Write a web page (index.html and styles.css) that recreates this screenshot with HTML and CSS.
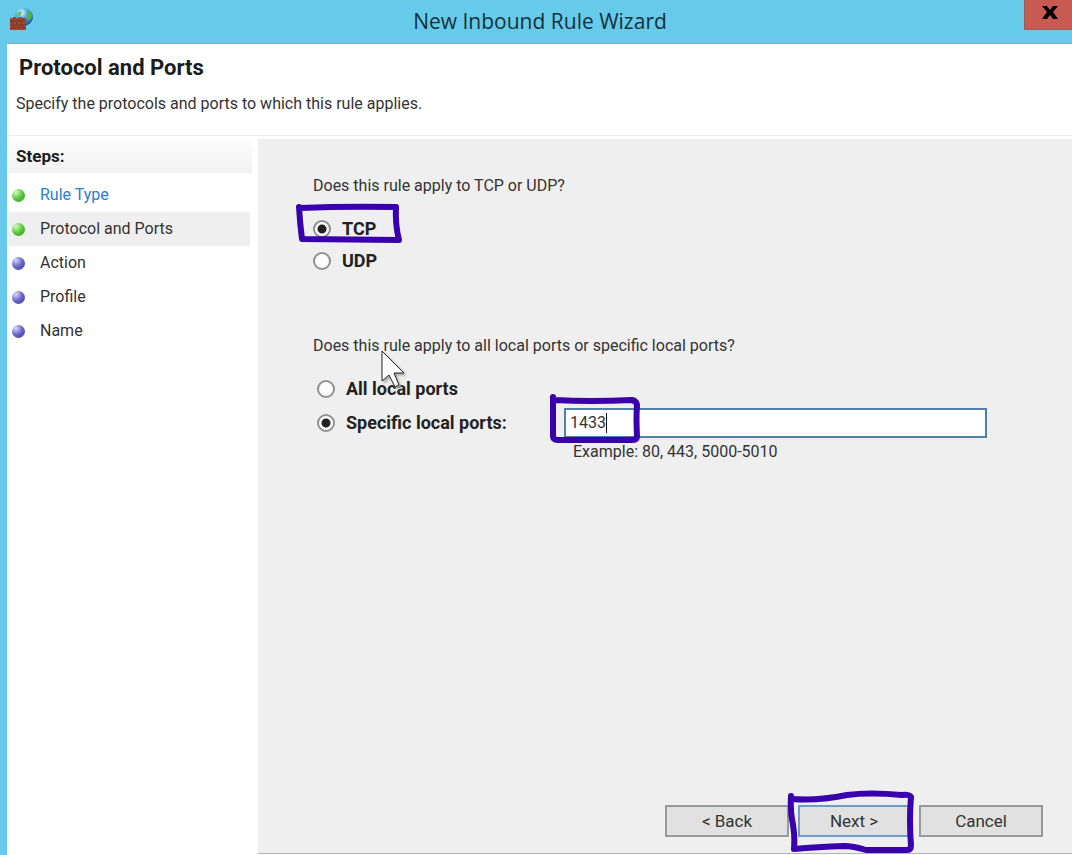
FILE: index.html
```html
<!DOCTYPE html>
<html lang="en">
<head>
  <meta charset="UTF-8" />
  <title>New Inbound Rule Wizard</title>
  <link rel="stylesheet" href="styles.css">
</head>
<body>
  <div class="titlebar">
    <svg class="app-icon" width="26" height="24" viewBox="0 0 26 24">
      <defs>
        <radialGradient id="globe" cx="35%" cy="25%" r="75%">
          <stop offset="0" stop-color="#e8f8ff" />
          <stop offset="0.4" stop-color="#5cb4dc" />
          <stop offset="1" stop-color="#1d5f9c" />
        </radialGradient>
      </defs>
      <circle cx="15" cy="9" r="9" fill="url(#globe)" />
      <path d="M18 3l3 1 2 3 -1 4 -2 1 -2 -4z" fill="#54b53c" />
      <path d="M8 6l3 -3 2 1 -2 4 -3 1z" fill="#72bd66" />
      <path d="M1 10h3v-1h3v1h3v-1h3v1h4v12H1z" fill="#a54832" />
      <path d="M1 13h16M1 17h16M1 20h16M5 10v3M10 10v3M14 10v3M3 13v4M8 13v4M12 13v4M5 17v3M10 17v3M14 17v3" stroke="#7c3424" fill="none" />
    </svg>
    <h1>New Inbound Rule Wizard</h1>
    <button class="close" aria-label="Close">
      <svg width="16" height="13" viewBox="0 0 16 13"><path d="M0 0h5l3 4 3-4h5l-5 6 5 7h-5l-3-4-3 4H0l5-7z" /></svg>
    </button>
  </div>

  <div class="window">
    <header>
      <h2>Protocol and Ports</h2>
      <p>Specify the protocols and ports to which this rule applies.</p>
    </header>

    <div class="main">
      <nav>
        <h3>Steps:</h3>
        <ul>
          <li class="done"><a href="#">Rule Type</a></li>
          <li class="done current">Protocol and Ports</li>
          <li>Action</li>
          <li>Profile</li>
          <li>Name</li>
        </ul>
      </nav>

      <form>
        <div class="question">
          <p>Does this rule apply to TCP or UDP?</p>
          <div class="option">
            <input type="radio" id="tcp" name="protocol" checked>
            <label for="tcp">TCP</label>
            <svg class="mark mark-tcp" width="108" height="42" viewBox="0 0 108 42">
              <path d="M4 5Q5 22 7 37L104 38Q100 22 101 5Q50 4 5 6" />
            </svg>
          </div>
          <div class="option">
            <input type="radio" id="udp" name="protocol">
            <label for="udp">UDP</label>
          </div>
        </div>

        <div class="question ports">
          <p>Does this rule apply to all local ports or specific local ports?
            <svg class="cursor" width="28" height="42" viewBox="0 0 28 42">
              <path d="M1 1V31L8 25L14 37L18 35L13 23H23Z" />
            </svg>
          </p>
          <div class="option">
            <input type="radio" id="all" name="ports">
            <label for="all">All local ports</label>
          </div>
          <div class="option specific">
            <input type="radio" id="specific" name="ports" checked>
            <label for="specific">Specific local ports:</label>
            <div class="field">
              <input type="text" id="portList" value="1433" aria-label="Port list">
              <span class="caret"></span>
              <svg class="mark mark-port" width="92" height="52" viewBox="0 0 92 52">
                <path d="M4 4V43Q4 47 9 47H84Q88 47 88 43Q87 25 88 13Q88 8 83 7Q40 9 6 7" />
              </svg>
            </div>
          </div>
          <p class="example">Example: 80, 443, 5000-5010</p>
        </div>

        <div class="buttons">
          <button type="button">&lt; Back</button>
          <div class="next-wrap">
            <button type="button" class="next">Next &gt;</button>
            <svg class="mark mark-next" width="128" height="64" viewBox="0 0 128 64">
              <path d="M4 6Q3 22 6 35Q8 46 7 59Q30 57 57 56Q66 56 79 60L120 60Q124 60 124 55Q122 30 124 7Q122 4 115 5Q82 2 60 5Q30 11 6 9" />
            </svg>
          </div>
          <button type="button">Cancel</button>
        </div>
      </form>
    </div>
  </div>
</body>
</html>
```

FILE: styles.css
```css
* {
  box-sizing: border-box;
}
body {
  margin: 0;
  min-height: 100vh;
  display: flex;
  flex-direction: column;
  background: #66cbea;
  font-family: Roboto, "Liberation Sans", sans-serif;
  font-size: 16px;
  line-height: 24px;
  color: #333;
}
h1, h2, h3, p, ul {
  margin: 0;
}
.titlebar {
  display: grid;
  grid-template-columns: 48px 1fr 48px;
  height: 43px;
}
.app-icon {
  margin: 8px 0 0 9px;
}
h1 {
  padding-left: 8px;
  text-align: center;
  font: 21px/43px "Open Sans", sans-serif;
  color: #16303a;
}
.close {
  height: 30px;
  padding: 0 0 2px 2px;
  border: 1px solid #a05a58;
  border-width: 0 0 1px 1px;
  background: #c75b54;
}
.window {
  flex: 1;
  display: flex;
  flex-direction: column;
  margin-left: 7px;
  border-top: 1px solid #8fa5b0;
  border-bottom: 1px solid #fff;
  background: #fff;
}
header {
  height: 92px;
  padding: 12px 9px;
  border-bottom: 1px solid #ececec;
}
h2 {
  padding-left: 3px;
  font-size: 22px;
  line-height: 24px;
  color: #1c1c1c;
}
header p {
  margin-top: 12px;
}
.main {
  flex: 1;
  display: flex;
  padding-top: 3px;
}
nav {
  width: 245px;
  margin-right: 6px;
}
h3 {
  padding-left: 9px;
  font-size: 17px;
  line-height: 34px;
  color: #1c1c1c;
  background: linear-gradient(#fdfdfd, #f1f1f1);
}
ul {
  padding: 5px 0 0;
  list-style: none;
}
li {
  display: flex;
  align-items: center;
  gap: 15px;
  height: 34px;
  margin-right: 2px;
  padding-left: 5px;
}
li::before {
  content: "";
  width: 13px;
  height: 13px;
  border-radius: 50%;
  background: radial-gradient(circle at 30% 25%, #d8d8fa, #6862c8 50%, #5750a8 75%, #b8b4dc);
}
li.done::before {
  background: radial-gradient(circle at 30% 25%, #d4f8c8, #54ca38 50%, #45ad30 75%, #aedba4);
}
.current {
  background: #efefef;
}
a {
  color: #2b7cd3;
  text-decoration: none;
}
form {
  flex: 1;
  display: flex;
  flex-direction: column;
  padding: 35px 29px 16px 55px;
  border-bottom: 1px solid #b4b4b4;
  background: #efefef;
}
.question {
  margin-bottom: 57px;
}
.question p {
  position: relative;
  margin-bottom: 15px;
}
.option {
  position: relative;
  display: flex;
  align-items: center;
  height: 32px;
}
.option label {
  margin-left: 11px;
  font-size: 18px;
  font-weight: bold;
  color: #222;
}
input[type="radio"] {
  appearance: none;
  width: 18px;
  height: 18px;
  margin: 0;
  border: 2px solid #909090;
  border-radius: 50%;
  background: #fff;
}
input[type="radio"]:checked {
  background: radial-gradient(circle, #222 4px, #fff 5px);
}
.ports .option {
  margin-left: 4px;
}
.ports .option label {
  width: 218px;
}
.ports .specific {
  height: 35px;
}
.field {
  position: relative;
  flex: 1;
  margin-right: 56px;
}
.field input {
  display: block;
  width: 100%;
  height: 30px;
  padding: 0 4px;
  border: 2px solid #4f80aa;
  background: #fff;
  font: inherit;
  color: #333;
}
.caret {
  position: absolute;
  left: 42px;
  top: 5px;
  width: 1px;
  height: 20px;
  background: #111;
}
.question .example {
  margin: 0 0 0 260px;
}
.buttons {
  display: flex;
  justify-content: flex-end;
  gap: 9px;
  margin-top: auto;
}
.buttons button {
  width: 124px;
  height: 32px;
  border: 2px solid #999;
  background: #e1e1e1;
  font: inherit;
  font-size: 17px;
  color: #333;
}
.next-wrap {
  position: relative;
}
.buttons .next {
  width: 112px;
  border-color: #6c9dc8;
}

/* pen marks and mouse pointer */
.mark {
  position: absolute;
  fill: none;
  stroke: #3b00ad;
  stroke-width: 6;
  stroke-linecap: round;
  stroke-linejoin: round;
}
.mark-tcp {
  left: -18px;
  top: -11px;
}
.mark-port {
  left: -15px;
  top: -15px;
}
.mark-next {
  left: -11px;
  top: -15px;
}
.cursor {
  position: absolute;
  left: 68px;
  top: 16px;
  z-index: 1;
  fill: #fff;
  stroke: #222;
  filter: drop-shadow(2px 2px 1px #aaa);
}
```
